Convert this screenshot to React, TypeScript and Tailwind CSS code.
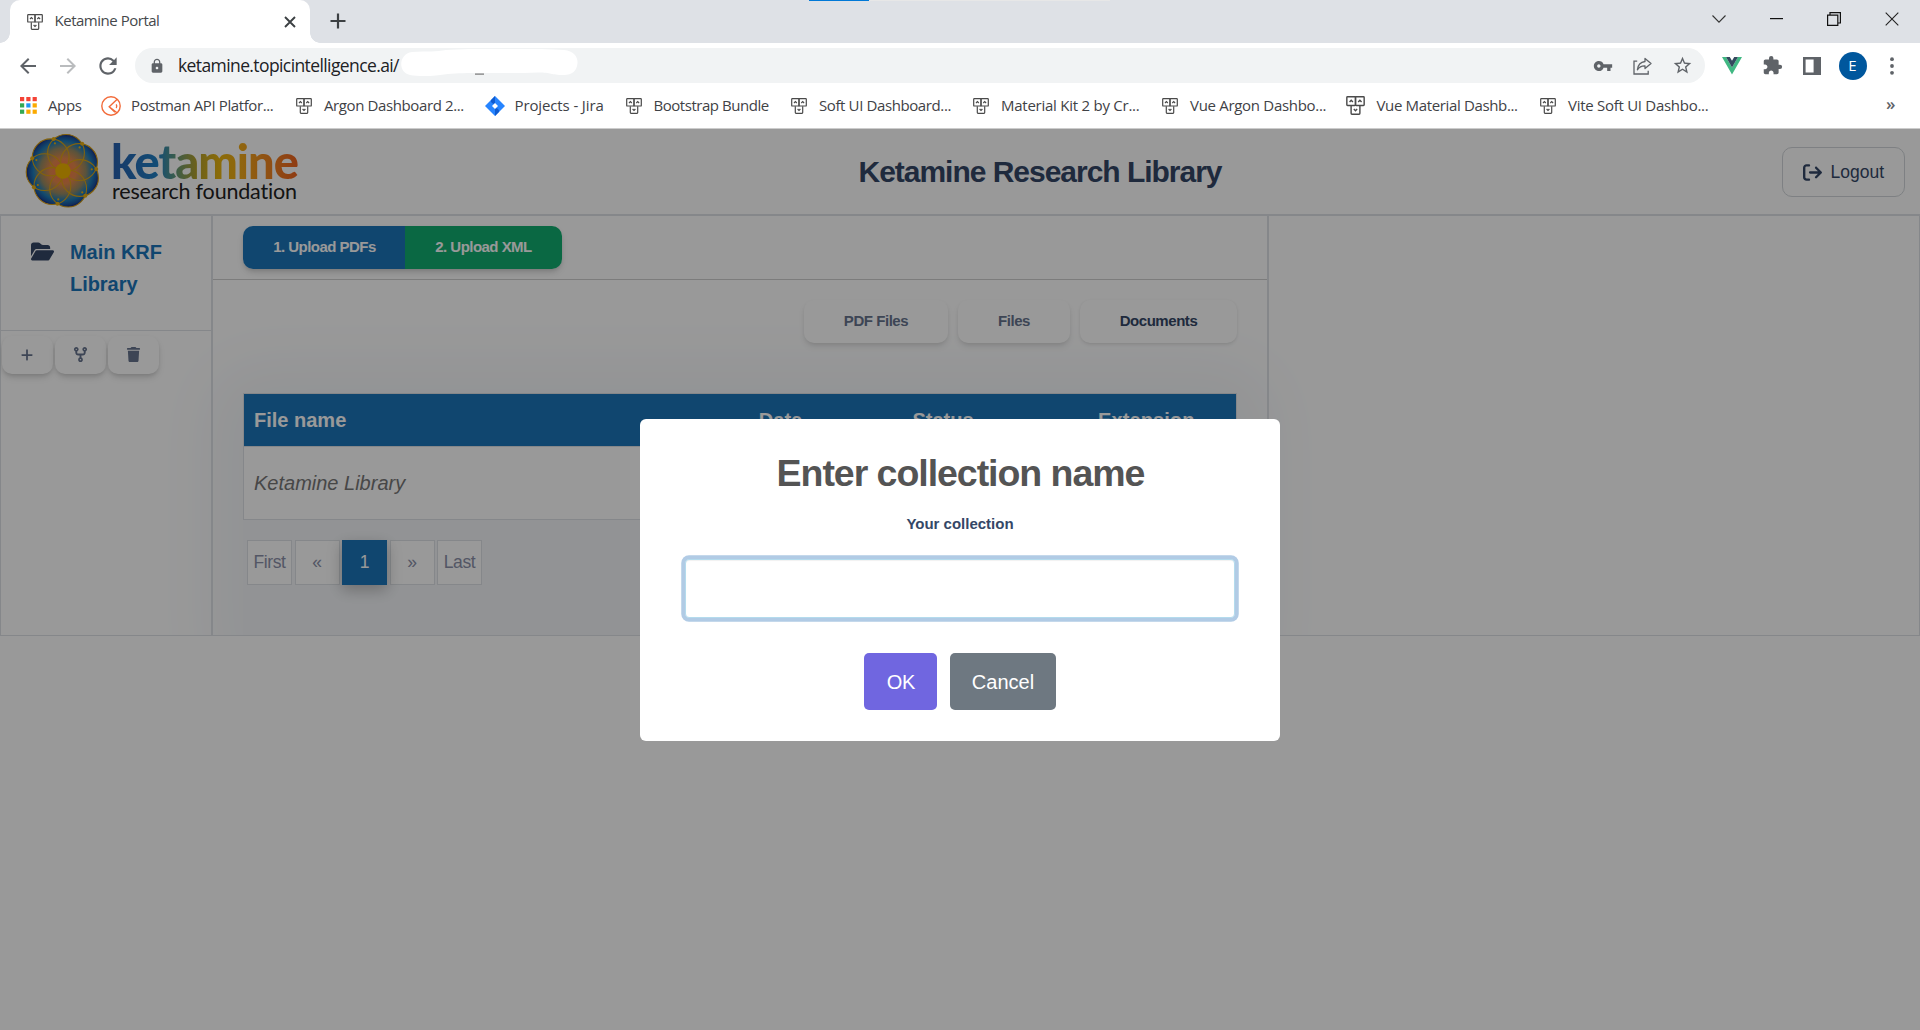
import type { ReactNode } from "react";
import { MdArrowBack, MdArrowForward, MdExtension, MdLock, MdRefresh, MdStarBorder, MdVpnKey } from "react-icons/md";
import { FaArrowRightFromBracket, FaCodeFork, FaFolderOpen, FaPlus, FaTrash } from "react-icons/fa6";

function BoxesIcon({ size = 16 }: { size?: number }) {
  return (
    <svg width={size} height={size} viewBox="0 0 16 16" fill="none" stroke="#4a4a4a" strokeWidth="1.2" className="shrink-0">
      <rect x="0.7" y="0.7" width="7.3" height="7.3" rx="0.6" />
      <rect x="8" y="0.7" width="7.3" height="7.3" rx="0.6" />
      <path d="M4.3 8.2V14.6q0 .7.7.7h6q.7 0 .7-.7V8.2" />
      <path d="M3 5l1.4-1.4L5.8 5M10.3 5l1.4-1.4L13.1 5M6.6 11l1.4 1.4L9.4 11" />
    </svg>
  );
}

function PostmanIcon() {
  return (
    <svg width="20" height="20" viewBox="0 0 20 20" fill="none" stroke="#f26b3a" strokeWidth="1.4" className="shrink-0">
      <circle cx="10" cy="10" r="9.2" />
      <path d="M16.2 3.2L8.2 10.8l5.8 5.4M8.2 10.8l7.8 6" />
      <path d="M15.2 8.4q1.2 1.8 0 3.6" />
    </svg>
  );
}

function JiraIcon() {
  return (
    <svg width="20" height="20" viewBox="0 0 20 20" className="shrink-0">
      <path d="M10 0l10 10-10 10L0 10z" fill="#2684ff" />
      <path d="M10 0l-4.2 4.2Q6 8 10 8zM10 20l4.2-4.2Q14 12 10 12z" fill="#0f5bd0" />
      <path d="M10 7l3 3-3 3-3-3z" fill="#fff" />
    </svg>
  );
}

function AppsIcon() {
  const colors = ["#f44336", "#f44336", "#f44336", "#34a853", "#2196f3", "#fbaa00", "#34a853", "#fbaa00", "#fbaa00"];
  return (
    <svg width="17" height="17" viewBox="0 0 17 17" className="shrink-0">
      {colors.map((c, i) => (
        <rect key={i} x={(i % 3) * 6.3} y={Math.floor(i / 3) * 6.3} width="4.2" height="4.2" fill={c} />
      ))}
    </svg>
  );
}

function Bookmark({ icon, label, className, gap }: { icon: ReactNode; label: string; className: string; gap: string }) {
  return (
    <div className={`flex h-full shrink-0 items-center ${className}`}>
      {icon}
      <span className={`whitespace-nowrap ${gap}`}>{label}</span>
    </div>
  );
}

function TabStrip() {
  return (
    <div className="relative flex h-[43px] bg-[#dee1e6]">
      <div className="h-[10px] w-[10px] self-end bg-[radial-gradient(circle_at_0_0,#dee1e6_9.5px,#fff_10px)]" />
      <div className="flex w-[300px] items-center rounded-t-[10px] bg-white pr-[14px] pl-[17px]">
        <BoxesIcon />
        <span className="mt-[-2px] ml-[11.5px] grow text-[15px] tracking-[-0.48px] text-[#45484c]">Ketamine Portal</span>
        <svg width="12" height="12" viewBox="0 0 12 12" stroke="#3c4043" strokeWidth="1.9">
          <path d="M1 1l10 10M11 1L1 11" />
        </svg>
      </div>
      <div className="h-[10px] w-[10px] self-end bg-[radial-gradient(circle_at_100%_0,#dee1e6_9.5px,#fff_10px)]" />
      <svg width="16" height="16" viewBox="0 0 16 16" stroke="#3c4043" strokeWidth="2.2" className="mt-[13px] ml-[9.5px]">
        <path d="M8 0.5v15M0.5 8h15" />
      </svg>
      <div className="mt-[11px] mr-[21.5px] ml-auto flex h-[16px] items-center">
        <svg width="14" height="8" viewBox="0 0 14 8" fill="none" stroke="#333" strokeWidth="1.1">
          <path d="M0.5 0.5L7 7.2L13.5 0.5" />
        </svg>
        <svg width="13" height="2" viewBox="0 0 13 2" className="ml-[44px]">
          <rect width="13" height="1.2" fill="#111" />
        </svg>
        <svg width="14" height="14" viewBox="0 0 14 14" fill="none" stroke="#111" strokeWidth="1.2" className="ml-[44px]">
          <path d="M0.6 3.1h10.2v10.2H0.6zM3 3V0.6h10.4V11H11" />
        </svg>
        <svg width="14" height="14" viewBox="0 0 14 14" stroke="#222" strokeWidth="1.1" className="ml-[43.5px]">
          <path d="M0.7 0.7l12.6 12.6M13.3 0.7L0.7 13.3" />
        </svg>
      </div>
      <div className="absolute top-0 left-[809px] flex h-px w-[301px] bg-[#e7e7e7]">
        <div className="h-px w-[60px] bg-[#0078d7]" />
      </div>
    </div>
  );
}

function Toolbar() {
  return (
    <div className="flex h-[45px] items-center bg-white text-[#5f6368]">
      <MdArrowBack size={24} className="ml-[15.5px]" />
      <MdArrowForward size={24} className="ml-[16px] text-[#babcbe]" />
      <MdRefresh size={26} className="ml-[15px]" />
      <div className="ml-[14.5px] flex h-[35px] w-[1570px] items-center rounded-full bg-[#f1f3f4] pr-[12px] pl-[14px]">
        <MdLock size={16} />
        <span className="mt-[-1px] ml-[13px] w-[222px] text-[17.5px] tracking-[-0.6px] whitespace-nowrap text-[#202124]">
          ketamine.topicintelligence.ai/
        </span>
        <svg width="180" height="28" viewBox="0 0 180 28" className="mt-[-6px]">
          <path
            d="M12 3C28 2 36 3 46 1C80-1 130-1 164 1C174 2 178 8 177.5 14C177 22 172 26 164 26C150 26 152 23.5 138 23.5C110 25 70 23 48 25C36 27 20 28 10 26C-2 24-2 5 12 3z"
            fill="#fff"
          />
          <rect x="75" y="24.5" width="9" height="1.2" fill="#777" />
        </svg>
        <MdVpnKey size={20} className="ml-auto" />
        <svg width="19" height="18" viewBox="0 0 19 18" fill="none" stroke="#5f6368" strokeWidth="1.3" className="ml-[20px]">
          <path d="M4.2 4.2H1v12.8h14.2v-3.2" />
          <path d="M12 1.4l6 5.1-6 5.1V8.8q-5-.2-7.6 4Q5.2 5.3 12 4.5z" strokeLinejoin="round" />
        </svg>
        <MdStarBorder size={21} className="ml-[20px]" />
      </div>
      <svg width="20" height="18" viewBox="0 0 20 18" className="ml-[17px]">
        <path d="M0 0h4l6 10.4L16 0h4L10 17.5z" fill="#41b883" />
        <path d="M4 0h3.8L10 3.8 12.2 0H16l-6 10.4z" fill="#34495e" />
      </svg>
      <MdExtension size={21} className="ml-[20px]" />
      <svg width="18" height="18" viewBox="0 0 18 18" className="ml-[20px]">
        <path d="M0 0h18v18H0zM2.6 2.6v12.800h8V2.6z" fill="#5f6368" fillRule="evenodd" />
      </svg>
      <div className="ml-[17.5px] flex h-[28px] w-[28px] items-center justify-center rounded-full bg-[#00579d] text-[15px] text-white">
        E
      </div>
      <svg width="4" height="18" viewBox="0 0 4 18" fill="#5f6368" className="ml-[23px]">
        <circle cx="2" cy="2.2" r="1.9" />
        <circle cx="2" cy="9" r="1.9" />
        <circle cx="2" cy="15.8" r="1.9" />
      </svg>
    </div>
  );
}

function BookmarksBar() {
  return (
    <div className="flex h-[41px] items-center border-b border-[#ccc] bg-white pb-[5px] pl-[20px] text-[15px] tracking-[-0.39px] text-[#3f4246]">
      <Bookmark icon={<AppsIcon />} label="Apps" className="w-[81px]" gap="ml-[11px]" />
      <Bookmark icon={<PostmanIcon />} label="Postman API Platfor..." className="w-[195px]" gap="ml-[10px]" />
      <Bookmark icon={<BoxesIcon />} label="Argon Dashboard 2..." className="w-[189px]" gap="ml-[12px]" />
      <Bookmark icon={<JiraIcon />} label="Projects - Jira" className="w-[141px] tracking-[-0.12px]" gap="ml-[9.5px]" />
      <Bookmark icon={<BoxesIcon />} label="Bootstrap Bundle" className="w-[165px] tracking-[-0.46px]" gap="ml-[11.5px]" />
      <Bookmark icon={<BoxesIcon />} label="Soft UI Dashboard..." className="w-[182px]" gap="ml-[12px]" />
      <Bookmark icon={<BoxesIcon />} label="Material Kit 2 by Cr..." className="w-[189px] tracking-[-0.25px]" gap="ml-[12px]" />
      <Bookmark icon={<BoxesIcon />} label="Vue Argon Dashbo..." className="w-[184px] tracking-[-0.3px]" gap="ml-[12px]" />
      <Bookmark icon={<BoxesIcon size={19} />} label="Vue Material Dashb..." className="w-[194px] tracking-[-0.35px]" gap="ml-[11.5px]" />
      <Bookmark icon={<BoxesIcon />} label="Vite Soft UI Dashbo..." className="w-[180px] tracking-[-0.28px]" gap="ml-[12px]" />
      <span className="mr-[25px] mb-[3px] ml-auto text-[17px] font-semibold text-[#5f6368]">»</span>
    </div>
  );
}

const RING = Array.from({ length: 7 }, (_, k) => k);
const polar = (r: number, deg: number) => [Math.cos((deg * Math.PI) / 180) * r, Math.sin((deg * Math.PI) / 180) * r];

function FlowerLogo() {
  return (
    <svg width="76" height="76" viewBox="-38 -38 76 76" className="shrink-0">
      <defs>
        <radialGradient id="petal" gradientUnits="userSpaceOnUse" cx="0" cy="0" r="37">
          <stop offset="0" stopColor="#ff7350" />
          <stop offset="0.35" stopColor="#e8894a" />
          <stop offset="0.62" stopColor="#968a64" />
          <stop offset="0.8" stopColor="#1f7db8" />
          <stop offset="0.93" stopColor="#1a4f9c" />
          <stop offset="1" stopColor="#1e1a72" />
        </radialGradient>
      </defs>
      {RING.map((k) => {
        const [x, y] = polar(18.4, 22.3 + k * 51.43);
        return <circle key={k} cx={x} cy={y} r="18.4" fill="url(#petal)" />;
      })}
      {RING.map((k) => {
        const [x, y] = polar(18.4, 22.3 + k * 51.43);
        return <circle key={k} cx={x} cy={y} r="18.4" fill="none" stroke="#dca414" strokeWidth="1.1" />;
      })}
      {RING.map((k) => {
        const [x, y] = polar(33.3, -3.4 + k * 51.43);
        const [a, b] = polar(28.8, -3.4 + k * 51.43);
        return (
          <g key={k} fill="#eab010">
            <circle cx={x} cy={y} r="2" />
            <circle cx={a} cy={b} r="1.1" />
          </g>
        );
      })}
      <circle r="7.8" fill="#f0b400" />
    </svg>
  );
}

function PageHeader() {
  return (
    <header className="flex h-[87px] items-start border-b-2 border-[#dee2e6]">
      <div className="flex w-[298px] shrink-0 pt-[4px] pl-[24.5px]">
        <FlowerLogo />
        <div className="ml-[10.5px] flex flex-col pt-[8px] font-['Lato',sans-serif] whitespace-nowrap">
          <span className="h-[40px] w-[187px] bg-[linear-gradient(90deg,#285fae_0%,#2080c4_25%,#5f9a80_34%,#b0a030_45%,#e8b410_58%,#f0a818_70%,#f08a20_82%,#ee6420_100%)] bg-clip-text text-[47px] leading-[41px] font-black tracking-[-1px] text-transparent">
            ketamine
          </span>
          <span className="ml-[1px] text-[21.5px] leading-[20px] tracking-[-0.18px] text-[#222]">research foundation</span>
        </div>
      </div>
      <h1 className="mt-[25px] grow text-center text-[30px] leading-[36px] font-bold tracking-[-1.02px] text-[#344767]">
        Ketamine Research Library
      </h1>
      <button className="mt-[18px] mr-[15px] flex h-[50px] w-[123px] items-center rounded-[10px] border border-[#d2d6da] pl-[20px] text-[17.5px] text-[#344767]">
        <FaArrowRightFromBracket size={19} />
        <span className="ml-[8.5px]">Logout</span>
      </button>
    </header>
  );
}

function IconButton({ children }: { children: ReactNode }) {
  return (
    <button className="flex h-[38px] w-[51px] items-center justify-center rounded-[10px] bg-white pb-px text-[#67748e] shadow-[0_4px_7px_-1px_rgba(0,0,0,0.15),0_2px_4px_-1px_rgba(0,0,0,0.1)]">
      {children}
    </button>
  );
}

function Sidebar() {
  return (
    <aside className="relative w-[213px] shrink-0 border-r-2 border-l border-[#dee2e6]">
      <div className="flex h-[115px] border-b border-[#dee2e6] pt-[20px] pl-[30px]">
        <FaFolderOpen size={23} className="mt-[4px] text-[#344767]" />
        <span className="ml-[16px] w-[110px] text-[20px] leading-[32px] font-bold tracking-[-0.04px] text-[#1b75b9]">
          Main KRF Library
        </span>
      </div>
      <div className="flex gap-[2px] pt-[5px] pl-[0.5px]">
        <IconButton><FaPlus size={14} /></IconButton>
        <IconButton><FaCodeFork size={15} /></IconButton>
        <IconButton><FaTrash size={15} /></IconButton>
      </div>
    </aside>
  );
}

function ViewButton({ label, className }: { label: string; className: string }) {
  return (
    <button className={`h-[43px] rounded-[10px] bg-white text-[15px] font-bold tracking-[-0.45px] ${className}`}>{label}</button>
  );
}

function FilesTable() {
  return (
    <table className="h-[127px] w-full table-fixed border-collapse border border-[#dee2e6] bg-white text-[20px]">
      <colgroup>
        <col className="w-[463px]" />
        <col className="w-[148px]" />
        <col className="w-[178px]" />
        <col />
      </colgroup>
      <thead>
        <tr className="h-[53px] border-b border-[#dee2e6] bg-[#1b75b9] text-white">
          <th className="pl-[10px] text-left">File name</th>
          <th>Date</th>
          <th className="pr-[1px]">Status</th>
          <th className="pl-[24px] tracking-[0.1px]">Extension</th>
        </tr>
      </thead>
      <tbody>
        <tr className="text-[#777]">
          <td className="pl-[10px] italic">Ketamine Library</td>
          <td />
          <td />
          <td />
        </tr>
      </tbody>
    </table>
  );
}

function Pagination() {
  const cell = "flex h-[45px] w-[45px] items-center justify-center text-[17.5px] tracking-[-0.4px]";
  const idle = "border border-[#dee2e6] bg-white text-[#8b90a8]";
  return (
    <div className="mt-[20px] ml-[4px] flex gap-[2.5px]">
      <span className={`${cell} ${idle}`}>First</span>
      <span className={`${cell} ${idle}`}>«</span>
      <span className={`${cell} z-10 bg-[#1b75b9] text-white shadow-[0_5px_14px_rgba(0,0,0,0.25)]`}>1</span>
      <span className={`${cell} ${idle}`}>»</span>
      <span className={`${cell} ${idle}`}>Last</span>
    </div>
  );
}

function MainPanel() {
  return (
    <main className="relative flex w-[1056px] shrink-0 flex-col border-r-2 border-[#dee2e6]">
      <div className="flex h-[64px] items-start border-b border-[#cfcfcf] pt-[10px] pl-[30px]">
        <div className="flex h-[43px] overflow-hidden rounded-[10px] text-[15px] font-bold tracking-[-0.53px] text-white shadow-[0_4px_7px_-1px_rgba(0,0,0,0.15),0_2px_4px_-1px_rgba(0,0,0,0.1)]">
          <button className="w-[162px] bg-[#1b75b9] pl-px">1. Upload PDFs</button>
          <button className="w-[157px] bg-[#12ad70]">2. Upload XML</button>
        </div>
      </div>
      <div className="flex justify-end gap-[10px] pt-[20px] pr-[30px]">
        <ViewButton label="PDF Files" className="w-[144px] text-[#67748e] shadow-[0_4px_7px_-1px_rgba(0,0,0,0.11),0_2px_4px_-1px_rgba(0,0,0,0.07)]" />
        <ViewButton label="Files" className="w-[112px] text-[#67748e] shadow-[0_4px_7px_-1px_rgba(0,0,0,0.11),0_2px_4px_-1px_rgba(0,0,0,0.07)]" />
        <ViewButton label="Documents" className="w-[157px] text-[#344767] shadow-[0_2px_4px_-1px_rgba(0,0,0,0.14),0_0_3px_rgba(0,0,0,0.03)]" />
      </div>
      <div className="mt-[50px] px-[30px]">
        <FilesTable />
        <Pagination />
      </div>
    </main>
  );
}

function CollectionDialog() {
  return (
    <div className="absolute inset-0 z-20 flex items-start justify-center bg-black/40 pt-[290px]">
      <div className="flex h-[322px] w-[640px] flex-col items-center rounded-[6px] bg-white">
        <h2 className="mt-[32px] pl-px text-[37.5px] leading-[44px] font-bold tracking-[-1.04px] text-[#545454]">Enter collection name</h2>
        <label className="mt-[19px] text-[15px] leading-[20px] font-bold text-[#344767]">Your collection</label>
        <input className="mt-[25px] h-[59px] w-[550px] rounded-[4px] border border-[#b4dbed] bg-white shadow-[inset_0_1px_1px_rgba(0,0,0,0.06),0_0_0_3.75px_#b1cbe5] outline-none" />
        <div className="mt-[35px] flex gap-[13px] text-[20px] text-white">
          <button className="h-[57px] w-[73px] rounded-[5px] bg-[#7066e0] pl-px tracking-[-0.3px]">OK</button>
          <button className="h-[57px] w-[106px] rounded-[5px] bg-[#6e7881]">Cancel</button>
        </div>
      </div>
    </div>
  );
}

export default function App() {
  return (
    <div className="flex h-[1030px] w-[1920px] flex-col overflow-hidden bg-white">
      <div className="font-['Open_Sans',sans-serif]">
        <TabStrip />
        <Toolbar />
        <BookmarksBar />
      </div>
      <div className="relative grow font-['Liberation_Sans',sans-serif]">
        <PageHeader />
        <div className="relative flex h-[420px] overflow-hidden border-b border-[#dee2e6]">
          <div className="absolute top-[184px] left-[243px] h-[260px] w-[994px] rounded-[20px] bg-[#f4f6f9] shadow-[0_0_60px_35px_#f4f6f9]" />
          <Sidebar />
          <MainPanel />
          <section className="relative grow border-r border-[#dee2e6]" />
        </div>
        <CollectionDialog />
      </div>
    </div>
  );
}
